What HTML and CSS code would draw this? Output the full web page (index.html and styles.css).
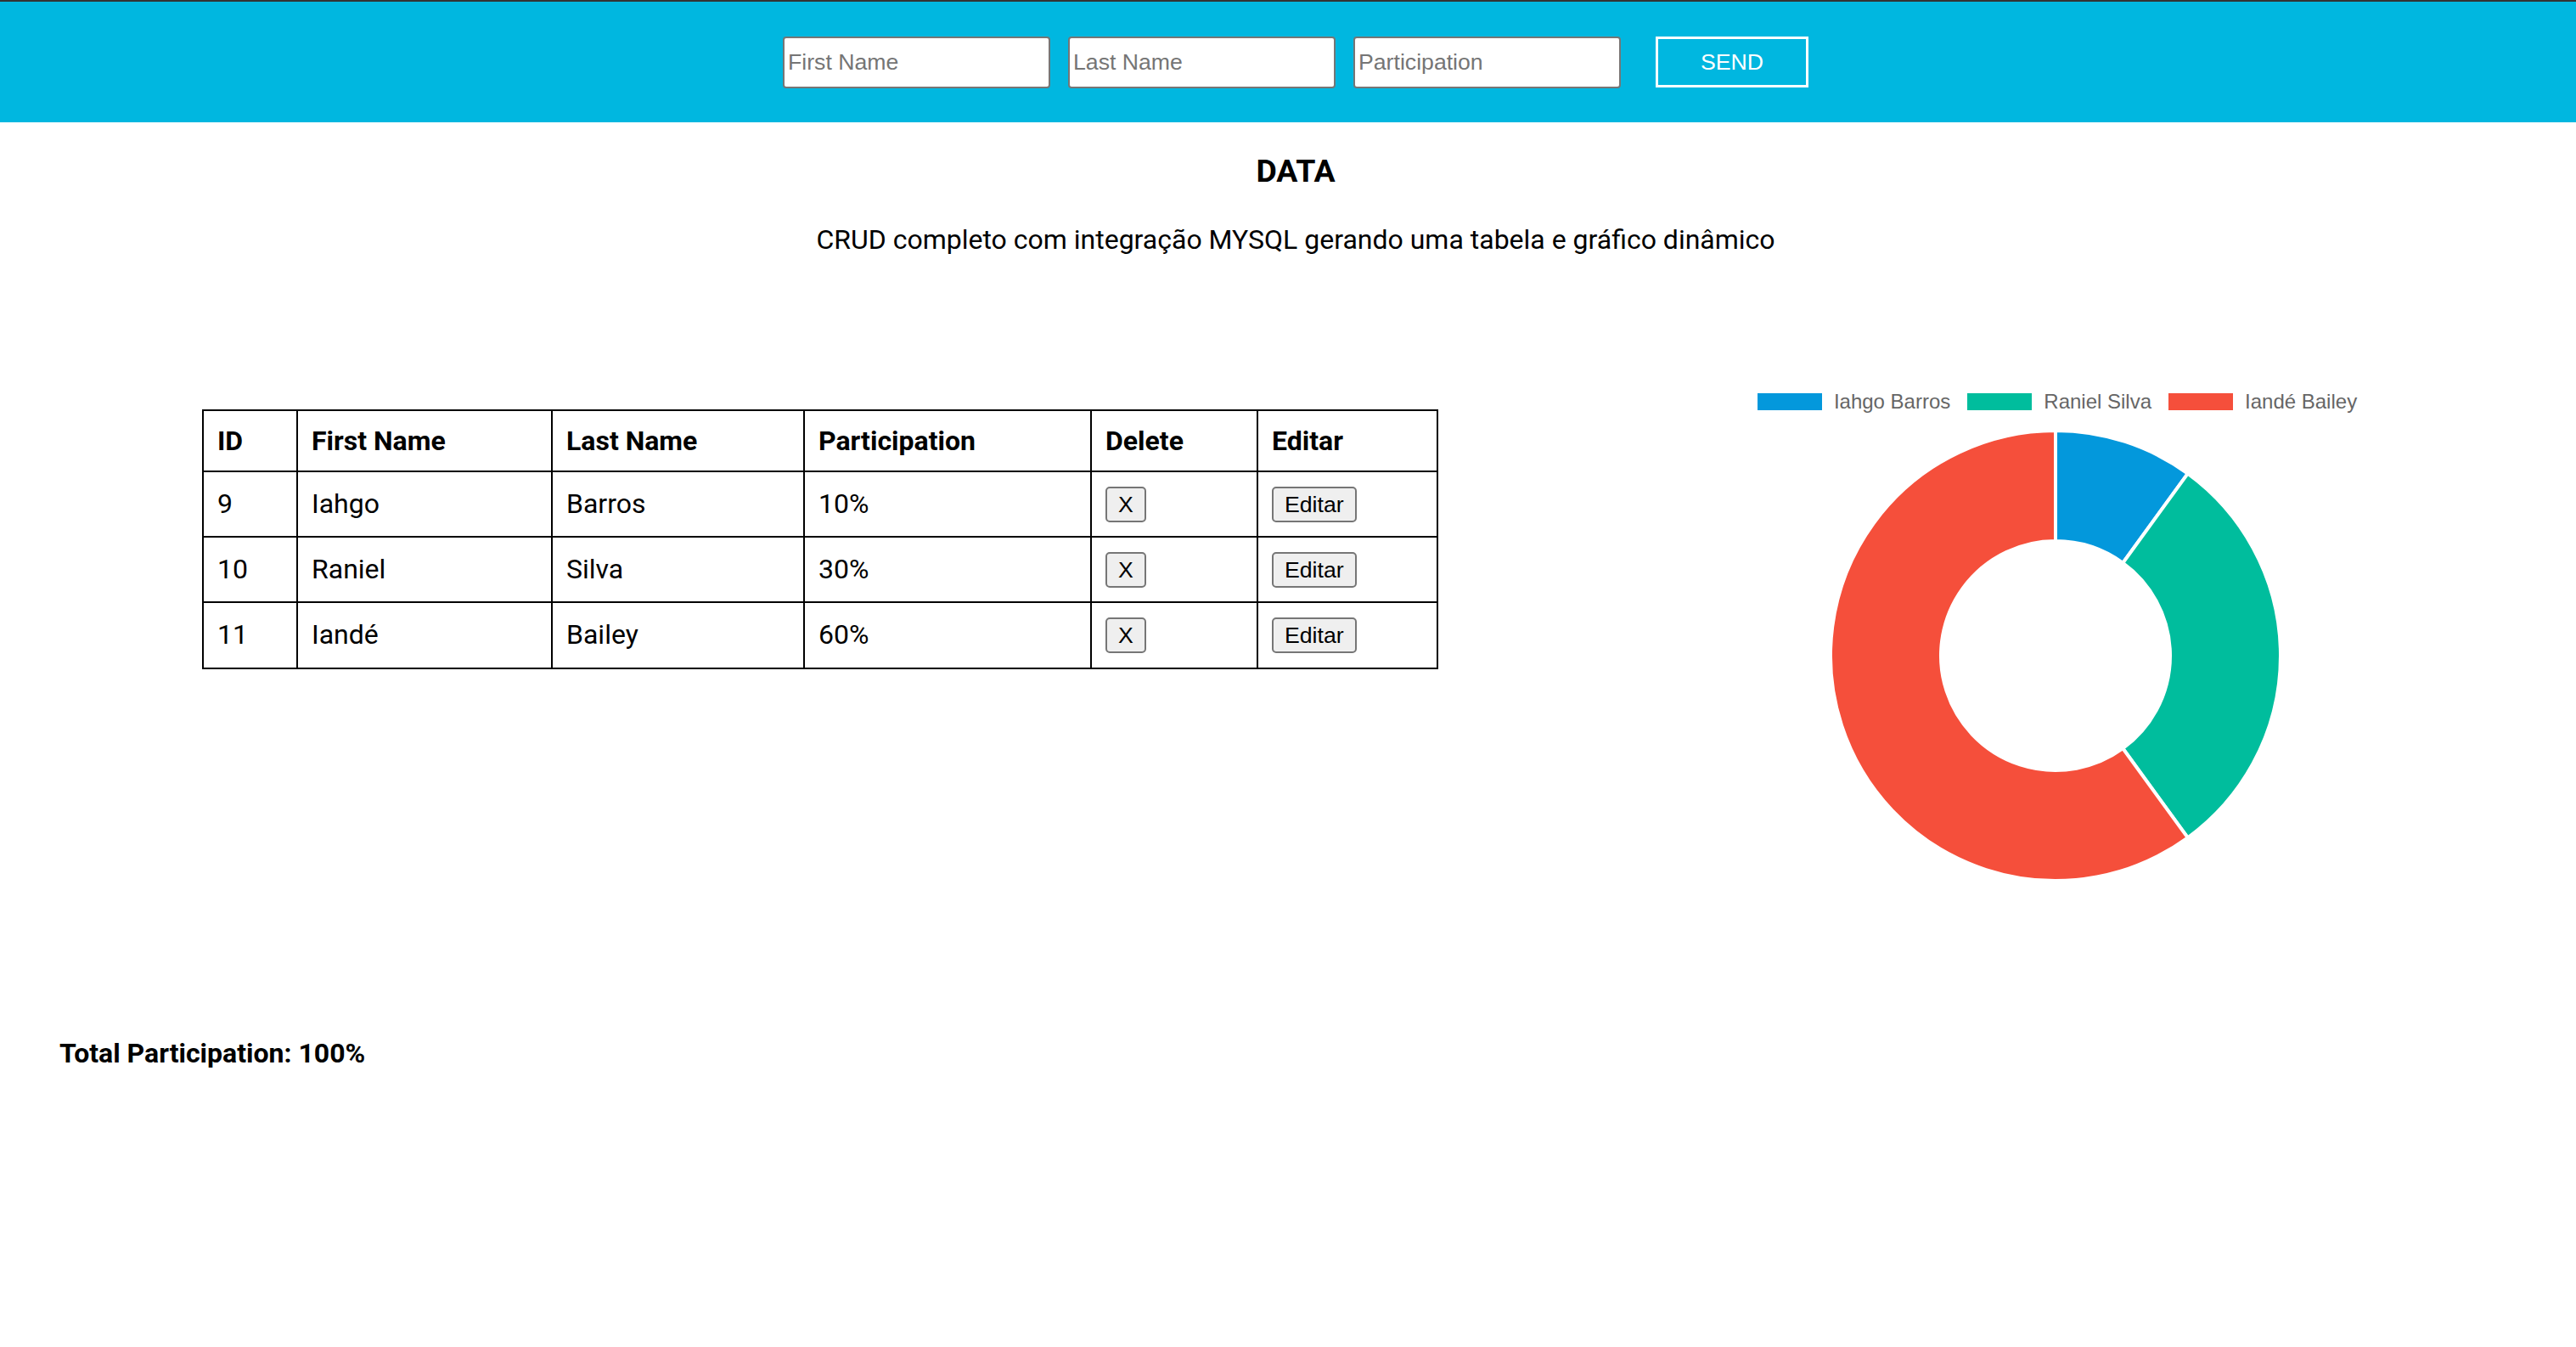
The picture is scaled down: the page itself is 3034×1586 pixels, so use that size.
FILE: index.html
```html
<!DOCTYPE html>
<html lang="pt">
<head>
<meta charset="utf-8">
<title>CRUD</title>
<link rel="stylesheet" href="styles.css">
</head>
<body>
<header class="topbar">
  <form class="entry-form">
    <input class="field" type="text" placeholder="First Name">
    <input class="field" type="text" placeholder="Last Name">
    <input class="field" type="text" placeholder="Participation">
    <button class="send" type="button">SEND</button>
  </form>
</header>
<main>
  <section class="intro">
    <h3 class="title">DATA</h3>
    <p class="subtitle">CRUD completo com integração MYSQL gerando uma tabela e gráfico dinâmico</p>
  </section>
  <section class="content">
    <table class="data-table">
      <colgroup>
        <col class="c-id"><col class="c-first"><col class="c-last"><col class="c-part"><col class="c-del"><col class="c-edit">
      </colgroup>
      <thead>
        <tr><th>ID</th><th>First Name</th><th>Last Name</th><th>Participation</th><th>Delete</th><th>Editar</th></tr>
      </thead>
      <tbody>
        <tr><td>9</td><td>Iahgo</td><td>Barros</td><td>10%</td><td><button class="btn" type="button">X</button></td><td><button class="btn" type="button">Editar</button></td></tr>
        <tr><td>10</td><td>Raniel</td><td>Silva</td><td>30%</td><td><button class="btn" type="button">X</button></td><td><button class="btn" type="button">Editar</button></td></tr>
        <tr><td>11</td><td>Iandé</td><td>Bailey</td><td>60%</td><td><button class="btn" type="button">X</button></td><td><button class="btn" type="button">Editar</button></td></tr>
      </tbody>
    </table>
    <div class="chart">
      <ul class="legend">
        <li class="legend-item"><span class="swatch sw-blue"></span>Iahgo Barros</li>
        <li class="legend-item"><span class="swatch sw-green"></span>Raniel Silva</li>
        <li class="legend-item"><span class="swatch sw-red"></span>Iandé Bailey</li>
      </ul>
      <svg class="donut" width="530" height="530" viewBox="0 0 530 530">
        <path class="seg-blue" d="M265 0 A265 265 0 0 1 420.763 50.61 L344.351 155.783 A135 135 0 0 0 265 130 Z"/>
        <path class="seg-green" d="M420.763 50.61 A265 265 0 0 1 420.763 479.39 L344.351 374.217 A135 135 0 0 0 344.351 155.783 Z"/>
        <path class="seg-red" d="M420.763 479.39 A265 265 0 1 1 265 0 L265 130 A135 135 0 1 0 344.351 374.217 Z"/>
      </svg>
    </div>
  </section>
  <p class="total">Total Participation: 100%</p>
</main>
</body>
</html>
```

FILE: styles.css
```css
html, body {
  margin: 0;
  padding: 0;
  background: #ffffff;
}
body {
  font-family: Roboto, "Liberation Sans", Arial, sans-serif;
  color: #000;
}
.topbar {
  border-top: 2px solid #333333;
  height: 142px;
  background: #00b7e0;
  display: flex;
  align-items: center;
  justify-content: center;
  padding-left: 18px;
}
.entry-form {
  display: flex;
  align-items: center;
  margin: 0;
}
.field {
  box-sizing: border-box;
  width: 315px;
  height: 61px;
  margin: 0 21px 0 0;
  padding: 2px 4px;
  border: 2px solid #767676;
  border-radius: 4px;
  background: #fff;
  font-family: "Liberation Sans", Arial, sans-serif;
  font-size: 26.67px;
  color: #000;
}
.field::placeholder {
  color: #757575;
}
.field:nth-child(3) {
  margin-right: 41px;
}
.send {
  box-sizing: border-box;
  width: 180px;
  height: 60px;
  border: 3px solid #ffffff;
  background: transparent;
  color: #ffffff;
  font-family: "Liberation Sans", Arial, sans-serif;
  font-size: 26.67px;
  padding: 0;
}
.intro {
  text-align: center;
  padding-left: 18px;
}
.title {
  font-size: 37.44px;
  font-weight: 700;
  line-height: 44px;
  margin: 35px 0 0;
}
.subtitle {
  font-size: 32px;
  line-height: 37px;
  margin: 41px 0 0;
}
.content {
  display: flex;
  align-items: flex-start;
  padding: 0 233px 0 238px;
  margin-top: 161px;
}
.data-table {
  margin-top: 20px;
  border-collapse: collapse;
  table-layout: fixed;
  width: 1456px;
  font-size: 32px;
}
.c-id { width: 111px; }
.c-first { width: 300px; }
.c-last { width: 297px; }
.c-part { width: 338px; }
.c-del { width: 196px; }
.c-edit { width: 212px; }
.data-table th,
.data-table td {
  border: 2px solid #000;
  text-align: left;
  vertical-align: middle;
  padding: 16px 16px;
}
.data-table th {
  font-size: 32px;
  font-weight: 700;
  line-height: 40px;
  padding-top: 15px;
  padding-bottom: 15px;
}
.data-table td {
  line-height: 37px;
  padding-top: 16.6px;
  padding-bottom: 16.6px;
}
.btn {
  box-sizing: border-box;
  height: 42px;
  padding: 0 13px;
  border: 2px solid #767676;
  border-radius: 5px;
  background: #efefef;
  color: #000;
  font-family: "Liberation Sans", Arial, sans-serif;
  font-size: 26.67px;
  line-height: 38px;
  vertical-align: middle;
}
.chart {
  margin-left: auto;
  width: 760px;
  display: flex;
  flex-direction: column;
  align-items: center;
}
.legend {
  list-style: none;
  margin: 1px 0 0 4px;
  padding: 0;
  display: flex;
  gap: 20px;
  height: 20px;
  font-family: "Liberation Sans", Arial, sans-serif;
  font-size: 24px;
  line-height: 20px;
  color: #666666;
}
.legend-item {
  display: flex;
  align-items: center;
  gap: 14px;
  white-space: nowrap;
}
.swatch {
  display: block;
  width: 76px;
  height: 20px;
}
.sw-blue { background: #0398dc; }
.sw-green { background: #00bd9d; }
.sw-red { background: #f54f3b; }
.donut {
  display: block;
  margin-top: 24px;
  overflow: visible;
}
.donut path {
  stroke: #ffffff;
  stroke-width: 4;
  stroke-linejoin: miter;
}
.seg-blue { fill: #0398dc; }
.seg-green { fill: #00bd9d; }
.seg-red { fill: #f54f3b; }
.total {
  font-size: 32px;
  font-weight: 700;
  line-height: 37px;
  margin: 185px 0 0;
  padding-left: 70px;
}
```
